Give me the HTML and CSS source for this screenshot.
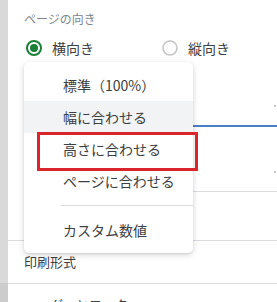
FILE: index.html
```html
<!DOCTYPE html>
<html lang="ja">
<head>
<meta charset="utf-8">
<link rel="stylesheet" href="styles.css">
</head>
<body>
<div class="layout">
  <div class="strip"></div>
  <div class="panel">
    <div class="section">
      <div class="label">ページの向き</div>
      <div class="radios">
        <div class="radio">
          <svg width="20" height="20" viewBox="0 0 20 20"><circle cx="10" cy="10" r="7" fill="none" stroke="#188038" stroke-width="2"/><circle cx="10" cy="10" r="4" fill="#188038"/></svg>
          <span>横向き</span>
        </div>
        <div class="radio second">
          <svg width="20" height="20" viewBox="0 0 20 20"><circle cx="10" cy="10" r="7" fill="none" stroke="#c4c4c4" stroke-width="1.6"/></svg>
          <span>縦向き</span>
        </div>
      </div>
      <div class="field focused"><span class="tick"></span></div>
      <div class="field"><span class="tick"></span></div>
    </div>
    <div class="row">印刷形式</div>
    <div class="row">ヘッダーとフッター</div>

    <div class="menu">
      <div class="item">標準（100%）</div>
      <div class="item hover">幅に合わせる</div>
      <div class="item">高さに合わせる</div>
      <div class="item">ページに合わせる</div>
      <div class="divider"></div>
      <div class="item">カスタム数値</div>
    </div>
    <div class="highlight-box"></div>
  </div>
</div>
</body>
</html>
```
FILE: styles.css
```css
* { box-sizing: border-box; }
html, body {
  margin: 0;
  padding: 0;
  background: #ffffff;
  overflow: hidden;
}
body {
  font-family: "Noto Sans CJK JP", "Noto Sans", sans-serif;
  color: #3c4043;
  width: 277px;
  height: 302px;
}
.layout {
  display: flex;
  height: 302px;
}
.strip {
  width: 8px;
  flex: none;
  background: linear-gradient(#d9d9d9 0, #d9d9d9 283px, #cccccc 283px);
}
.panel {
  position: relative;
  flex: 1;
  min-width: 0;
}
.section {
  padding: 11px 0 0 16px;
  height: 241px;
  border-bottom: 1px solid #dadce0;
}
.label {
  font-size: 12px;
  line-height: 16px;
  color: #80868b;
}
.radios {
  display: flex;
  margin-top: 9px;
  height: 24px;
  align-items: center;
}
.radio {
  display: flex;
  align-items: center;
  gap: 8px;
  font-size: 14px;
  color: #3c4043;
}
.radio svg { margin-left: 0; }
.radio.second { margin-left: 66px; }
.field {
  margin-top: 30px;
  height: 37px;
  border-bottom: 1px solid #dadce0;
  display: flex;
  justify-content: flex-end;
  align-items: center;
}
.field.focused {
  margin-top: 30px;
  border-bottom: 2px solid #4a7fc1;
  height: 37px;
}
.field + .field { margin-top: 28px; }
.tick {
  width: 2px;
  height: 2px;
  background: #c8c8c8;
  margin-right: 1px;
  margin-top: -3px;
}
.row {
  height: 43px;
  line-height: 42px;
  padding-left: 16px;
  font-size: 13px;
  color: #3c4043;
  border-bottom: 1px solid #dadce0;
}
.menu {
  position: absolute;
  left: 16px;
  top: 62px;
  width: 169px;
  padding: 7px 0;
  background: #ffffff;
  border-radius: 5px;
  box-shadow: 0 2px 6px rgba(0,0,0,0.16), 0 1px 2px rgba(0,0,0,0.08);
}
.item {
  height: 32px;
  line-height: 32px;
  padding-left: 39px;
  font-size: 14px;
  color: #3c4043;
}
.item.hover { background: #f1f3f4; }
.divider {
  height: 1px;
  background: #dadce0;
  margin: 8px 0 8px 37px;
}
.highlight-box {
  position: absolute;
  left: 29px;
  top: 132px;
  width: 161px;
  height: 39px;
  border: 3px solid #d9262c;
}
```
